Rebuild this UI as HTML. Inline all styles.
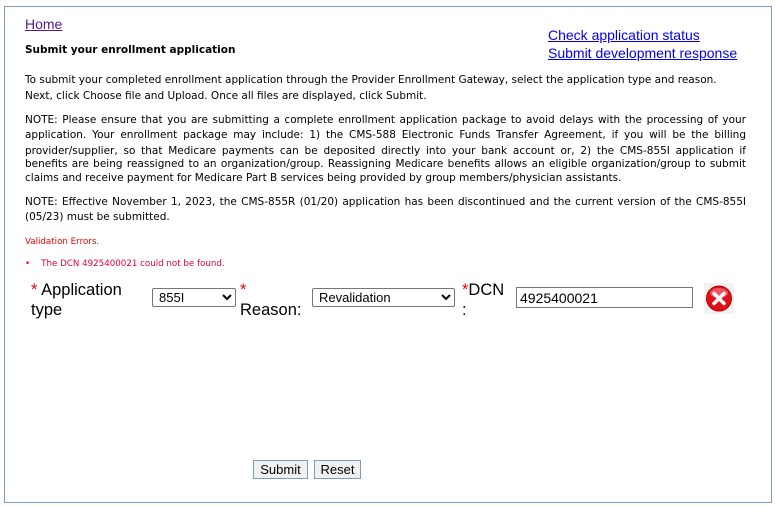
<!DOCTYPE html>
<html><head><meta charset="utf-8"><style>
body{margin:0;background:#fff;width:775px;height:507px;position:relative;font-family:"DejaVu Sans",Verdana,sans-serif;overflow:hidden}
.box{position:absolute;left:4px;top:6px;width:766px;height:495px;border:1px solid #7f9db9}
.a{position:absolute;white-space:nowrap}
a{color:#0000ee}
.t{font-size:10.5px;color:#000}
.j{position:absolute;left:25px;width:721px;font-size:10.5px;text-align:justify;text-align-last:justify;white-space:nowrap;overflow:hidden}
.big{font-family:"Liberation Sans",Arial,sans-serif;font-size:16.5px;color:#000}
.red{color:#e00}
select,input,button{font-family:"Liberation Sans",Arial,sans-serif;font-size:13px;box-sizing:border-box;position:absolute}
select{height:19px;border:1px solid #767676;background:#fff;padding:0 2px;border-radius:2px}
</style></head><body>
<div class="box"></div>
<div class="a" style="left:25px;top:16px;font-size:14px;font-family:'Liberation Sans',Arial,sans-serif"><a href="#" style="color:#551a8b">Home</a></div>
<div class="a t" style="left:25px;top:44px;font-weight:bold">Submit your enrollment application</div>
<div class="a" style="left:548px;top:26px;font-size:14px;font-family:'Liberation Sans',Arial,sans-serif;line-height:18px"><a href="#">Check application status</a><br><a href="#">Submit development response</a></div>
<div class="a t" style="left:25px;top:74px">To submit your completed enrollment application through the Provider Enrollment Gateway, select the application type and reason.</div>
<div class="a t" style="left:25px;top:90px">Next, click Choose file and Upload. Once all files are displayed, click Submit.</div>
<div class="j" style="top:114px">NOTE: Please ensure that you are submitting a complete enrollment application package to avoid delays with the processing of your</div>
<div class="j" style="top:129px">application. Your enrollment package may include: 1) the CMS-588 Electronic Funds Transfer Agreement, if you will be the billing</div>
<div class="j" style="top:145px">provider/supplier, so that Medicare payments can be deposited directly into your bank account or, 2) the CMS-855I application if</div>
<div class="j" style="top:158px">benefits are being reassigned to an organization/group. Reassigning Medicare benefits allows an eligible organization/group to submit</div>
<div class="a t" style="left:25px;top:172px">claims and receive payment for Medicare Part B services being provided by group members/physician assistants.</div>
<div class="j" style="top:196px">NOTE: Effective November 1, 2023, the CMS-855R (01/20) application has been discontinued and the current version of the CMS-855I</div>
<div class="a t" style="left:25px;top:211px">(05/23) must be submitted.</div>
<div class="a" style="left:25px;top:237px;font-size:8.7px;color:#e00">Validation Errors.</div>
<div class="a" style="left:25px;top:259px;font-size:8.7px;color:#e0003c">•&nbsp;&nbsp;&nbsp;&nbsp;The DCN 4925400021 could not be found.</div>
<div class="a big" style="left:31px;top:280px;line-height:20px"><span class="red">*</span> Application<br>type</div>
<select style="left:152px;top:288px;width:84px"><option>855I</option></select>
<div class="a big" style="left:240px;top:280px;line-height:20px"><span class="red">*</span><br>Reason:</div>
<select style="left:312px;top:288px;width:143px"><option>Revalidation</option></select>
<div class="a big" style="left:462px;top:280px;line-height:20px"><span class="red">*</span>DCN<br>:</div>
<input style="left:516px;top:287px;width:177px;height:21px;border:1px solid #767676;padding:0 3px;font-size:14px" value="4925400021">
<svg class="a" style="left:704px;top:283px" width="30" height="31" viewBox="0 0 30 31"><rect width="30" height="31" fill="#f2f2f2"/><circle cx="15" cy="15.5" r="12.5" fill="#e0101a" stroke="#b00" stroke-width="1"/><ellipse cx="15" cy="10" rx="9" ry="5" fill="#fff" opacity=".3"/><path d="M10 10.5l10 10M20 10.5l-10 10" stroke="#fff" stroke-width="3.5" stroke-linecap="round"/></svg>
<button style="left:253px;top:460px;width:55px;height:19px;border:1px solid #7f9db9;background:#f0f0f0;padding:0">Submit</button>
<button style="left:314px;top:460px;width:47px;height:19px;border:1px solid #7f9db9;background:#f0f0f0;padding:0">Reset</button>
</body></html>
